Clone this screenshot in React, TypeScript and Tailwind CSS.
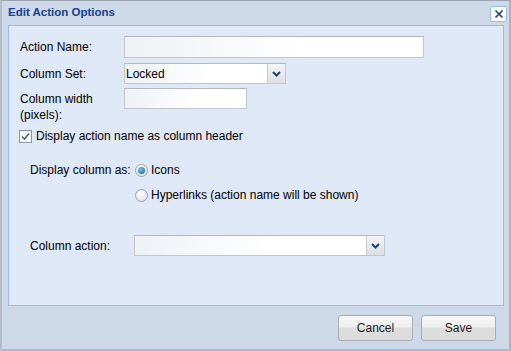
import React from "react"

const font = { fontFamily: '"Liberation Sans", Arial, sans-serif' }

function TextBox({ w, h = 22 }: { w: string; h?: number }) {
  return (
    <div
      className={`${w} border border-[#c3c7cc] border-t-[#b5b9be] bg-[linear-gradient(to_right,#eef2f5,#ffffff_60%)]`}
      style={{ height: h }}
    />
  )
}

function Chevron() {
  return (
    <svg width="9" height="6" viewBox="0 0 9 6">
      <path d="M1 1 L4.5 4.5 L8 1" stroke="#1f3f7a" strokeWidth="2" fill="none" />
    </svg>
  )
}

function Combo({ w, value }: { w: string; value?: string }) {
  return (
    <div className={`${w} h-[21px] flex border border-[#c3c7cc] border-t-[#b5b9be]`}>
      <div className="flex-1 flex items-center pl-[1px] text-[12px] text-black bg-[linear-gradient(to_right,#eef2f5,#ffffff_60%)]">
        {value}
      </div>
      <div className="w-[18px] flex items-center justify-center border-l border-[#c9ccd0] bg-[linear-gradient(to_bottom,#f4f5f6,#dcdfe3)]">
        <Chevron />
      </div>
    </div>
  )
}

function Radio({ checked }: { checked?: boolean }) {
  return (
    <div className="w-[13px] h-[13px] rounded-full border border-[#9aa3ad] bg-[radial-gradient(circle_at_40%_35%,#ffffff,#d6dade)] flex items-center justify-center">
      {checked && (
        <div className="w-[7px] h-[7px] rounded-full bg-[radial-gradient(circle_at_40%_35%,#7cc3ee,#0f5a94)]" />
      )}
    </div>
  )
}

function Button({ label }: { label: string }) {
  return (
    <button className="w-[75px] h-[26px] rounded-[3px] border border-[#a9acb0] bg-[linear-gradient(to_bottom,#f7f7f7_0%,#efefef_45%,#dddddd_50%,#dcdcdc_100%)] text-[12px] text-[#222]">
      {label}
    </button>
  )
}

export default function App() {
  return (
    <div
      className="w-[511px] h-[351px] flex flex-col bg-[#cdd9e8] border-t border-[#9aa2ad] border-l-2 border-l-[#b4bcc6] border-r-2 border-r-[#aab4c0] border-b-2 border-b-[#a9bbd4] text-black"
      style={font}
    >
      {/* title bar */}
      <div className="h-[24px] flex items-center justify-between pl-[6px] pr-[2px]">
        <span className="text-[11.5px] font-bold text-[#15428b]">Edit Action Options</span>
        <div className="w-[17px] h-[16px] mt-[2px] rounded-[2px] border border-[#99bbe8] bg-white flex items-center justify-center">
          <svg width="10" height="10" viewBox="0 0 10 10">
            <path d="M1.5 1.5 L8.5 8.5 M8.5 1.5 L1.5 8.5" stroke="#1b3e7c" strokeWidth="1.6" />
          </svg>
        </div>
      </div>

      {/* body */}
      <div className="ml-[6px] mr-[5px] h-[281px] border border-[#99bbe8] bg-[#dfe8f6] pl-[11px] pt-[10px] text-[12px]">
        <div className="flex items-center h-[22px]">
          <span className="w-[104px]">Action Name:</span>
          <TextBox w="w-[300px]" />
        </div>
        <div className="flex items-center h-[21px] mt-[5px]">
          <span className="w-[104px]">Column Set:</span>
          <Combo w="w-[162px]" value="Locked" />
        </div>
        <div className="flex items-start mt-[4px] h-[32px]">
          <span className="w-[104px] leading-[16px] mt-[3px]">
            Column width
            <br />
            (pixels):
          </span>
          <TextBox w="w-[123px]" h={21} />
        </div>
        <div className="flex items-center mt-[9px] h-[14px]">
          <div className="w-[13px] h-[13px] -ml-[1px] border border-[#8e959d] bg-[linear-gradient(to_bottom_right,#eef0f2,#ffffff)] flex items-center justify-center">
            <svg width="9" height="9" viewBox="0 0 9 9">
              <path d="M1 4.5 L3.5 7 L8 1.5" stroke="#4f6477" strokeWidth="1.6" fill="none" />
            </svg>
          </div>
          <span className="ml-[4px]">Display action name as column header</span>
        </div>

        <div className="pl-[10px] mt-[20px]">
          <div className="flex items-center h-[14px]">
            <span className="w-[105px]">Display column as:</span>
            <Radio checked />
            <span className="ml-[3px]">Icons</span>
          </div>
          <div className="flex items-center h-[14px] mt-[11px]">
            <span className="w-[105px]" />
            <Radio />
            <span className="ml-[3px]">Hyperlinks (action name will be shown)</span>
          </div>
          <div className="flex items-center h-[21px] mt-[33px]">
            <span className="w-[104px]">Column action:</span>
            <Combo w="w-[251px]" />
          </div>
        </div>
      </div>

      {/* footer */}
      <div className="flex-1 flex items-start justify-end gap-[8px] pt-[9px] pr-[13px]">
        <Button label="Cancel" />
        <Button label="Save" />
      </div>
    </div>
  )
}
